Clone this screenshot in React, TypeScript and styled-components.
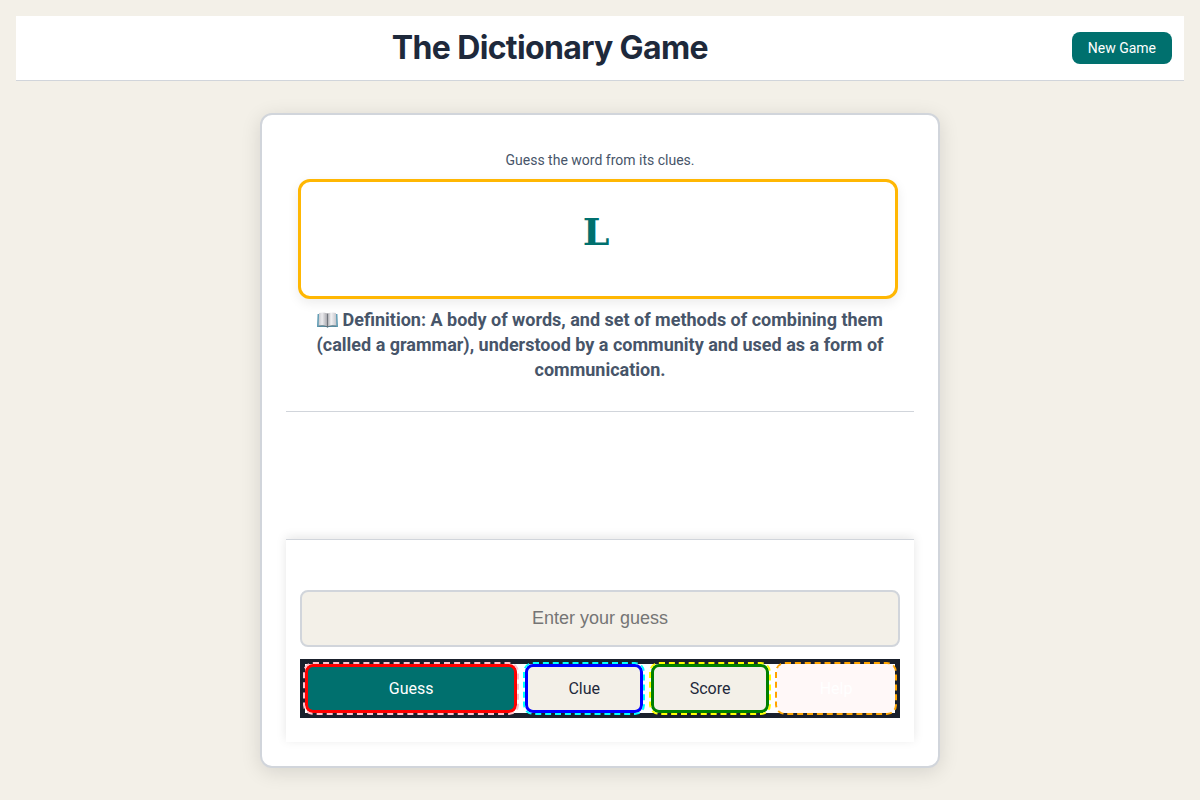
import React, { useState } from "react";
import styled, { createGlobalStyle } from "styled-components";

const GlobalStyle = createGlobalStyle`
  *, *::before, *::after { box-sizing: border-box; }
  body {
    margin: 0;
    background: #f3f0e8;
    color: #1e293b;
    font-family: Roboto, sans-serif;
  }
`;

const Page = styled.div`
  padding: 16px 16px 32px;
`;

const Header = styled.header`
  display: flex;
  align-items: center;
  padding: 12px;
  min-height: 65px;
  background: #fff;
  border-bottom: 1px solid #d1d5db;
`;

const Title = styled.h1`
  flex: 1;
  margin: 0;
  font-family: Inter, sans-serif;
  font-size: 32px;
  line-height: 40px;
  font-weight: 700;
  letter-spacing: -0.02em;
  text-align: center;
  color: #1e293b;
`;

const NewGameButton = styled.button`
  height: 32px;
  padding: 0 16px;
  border: 0;
  border-radius: 8px;
  background: #00706e;
  color: #fff;
  font-family: inherit;
  font-size: 14px;
  cursor: pointer;
`;

const Card = styled.main`
  max-width: 680px;
  margin: 32px auto 0;
  padding: 24px;
  border: 2px solid #d1d5db;
  border-radius: 12px;
  background: #fff;
  box-shadow: 0 4px 20px rgba(0, 0, 0, 0.12);
`;

const CluePanel = styled.section`
  padding: 11px 16px 29px 12px;
  border-bottom: 1px solid #d1d5db;
  text-align: center;
  color: #475569;
`;

const Intro = styled.p`
  margin: 0 -4px 9px 0;
  font-size: 14px;
  line-height: 20px;
`;

const WordBox = styled.div`
  display: flex;
  justify-content: center;
  height: 120px;
  padding-top: 22px;
  border: 3px solid #ffb703;
  border-radius: 12px;
  background: #fff;
  box-shadow: 0 4px 12px rgba(0, 0, 0, 0.08);
  color: #00706e;
  font-family: "DejaVu Serif", serif;
  font-size: 38px;
  line-height: 56px;
  font-weight: 700;
  letter-spacing: 4px;
`;

const Definition = styled.p`
  margin: 8px 12px 0 16px;
  font-size: 18px;
  line-height: 25px;
  font-weight: 700;
`;

const BookSvg = styled.svg`
  width: 21px;
  height: 16px;
  vertical-align: -2px;
`;

const GuessPanel = styled.form`
  margin-top: 127px;
  padding: 50px 14px 24px;
  border-top: 1px solid #d1d5db;
  background: #fff;
  box-shadow: 0 -2px 10px rgba(0, 0, 0, 0.1);
`;

const GuessInput = styled.input`
  display: block;
  width: 100%;
  height: 57px;
  margin-bottom: 12px;
  border: 2px solid #d1d5db;
  border-radius: 8px;
  background: #f3f0e8;
  color: #1e293b;
  font-family: "Liberation Sans", sans-serif;
  font-size: 18px;
  text-align: center;
  &::placeholder { color: #757575; }
`;

const Actions = styled.div`
  display: grid;
  grid-template-columns: 9fr 5fr 5fr 5fr;
  gap: 8px;
  border: 5px solid #1a202c;
`;

const ActionButton = styled.button<{
  $edge?: string;
  $dash: string;
  $fill?: string;
  $ink?: string;
}>`
  height: 49px;
  padding: 0;
  border: ${(p) => (p.$edge ? `3px solid ${p.$edge}` : "0")};
  outline: 2px dashed ${(p) => p.$dash};
  border-radius: 8px;
  background: ${(p) => p.$fill ?? "#f3f0e8"};
  color: ${(p) => p.$ink ?? "#1e293b"};
  font-family: inherit;
  font-size: 16px;
  cursor: pointer;
`;

function BookIcon() {
  return (
    <BookSvg viewBox="0 0 21 16" role="img" aria-label="Open book">
      <defs>
        <linearGradient id="leftPage" x1="0" x2="1" y1="0" y2="0">
          <stop offset="0" stopColor="#c9c9ce" />
          <stop offset="0.4" stopColor="#ececef" />
          <stop offset="1" stopColor="#a4a4aa" />
        </linearGradient>
        <linearGradient id="rightPage" x1="0" x2="1" y1="0" y2="0">
          <stop offset="0" stopColor="#a4a4aa" />
          <stop offset="0.4" stopColor="#f2f2f4" />
          <stop offset="1" stopColor="#c4c4ca" />
        </linearGradient>
      </defs>
      <path d="M0.6 2 L20.4 2 L21 15 L11.7 15 L10.5 15.7 L9.3 15 L0 15 Z" fill="#5b9ab3" />
      <path d="M2 1 Q6.5 0 10.5 1.6 L10.5 14.4 Q6 12.8 1.6 13.8 Z" fill="url(#leftPage)" />
      <path d="M19 1 Q14.5 0 10.5 1.6 L10.5 14.4 Q15 12.8 19.4 13.8 Z" fill="url(#rightPage)" />
      <path d="M1.6 14.1 Q6 13.1 10.5 14.7 Q15 13.1 19.4 14.1" fill="none" stroke="#55646d" strokeWidth="0.7" />
      <path d="M10.5 1.6 V15.2" stroke="#66686e" strokeWidth="0.8" />
    </BookSvg>
  );
}

export default function App() {
  const [guess, setGuess] = useState("");
  return (
    <>
      <GlobalStyle />
      <Page>
        <Header>
          <Title>The Dictionary Game</Title>
          <NewGameButton type="button">New Game</NewGameButton>
        </Header>
        <Card>
          <CluePanel>
            <Intro>Guess the word from its clues.</Intro>
            <WordBox>L</WordBox>
            <Definition>
              <BookIcon /> Definition: A body of words, and set of methods of combining them
              (called a grammar), understood by a community and used as a form of
              communication.
            </Definition>
          </CluePanel>
          <GuessPanel onSubmit={(e) => e.preventDefault()}>
            <GuessInput
              aria-label="Enter your guess"
              placeholder="Enter your guess"
              value={guess}
              onChange={(e) => setGuess(e.target.value)}
            />
            <Actions>
              <ActionButton type="submit" $edge="red" $dash="pink" $fill="#00706e" $ink="#fff">
                Guess
              </ActionButton>
              <ActionButton type="button" $edge="blue" $dash="cyan">Clue</ActionButton>
              <ActionButton type="button" $edge="green" $dash="yellow">Score</ActionButton>
              <ActionButton type="button" $dash="orange" $fill="#fff8f8" $ink="#fff">
                Help
              </ActionButton>
            </Actions>
          </GuessPanel>
        </Card>
      </Page>
    </>
  );
}
